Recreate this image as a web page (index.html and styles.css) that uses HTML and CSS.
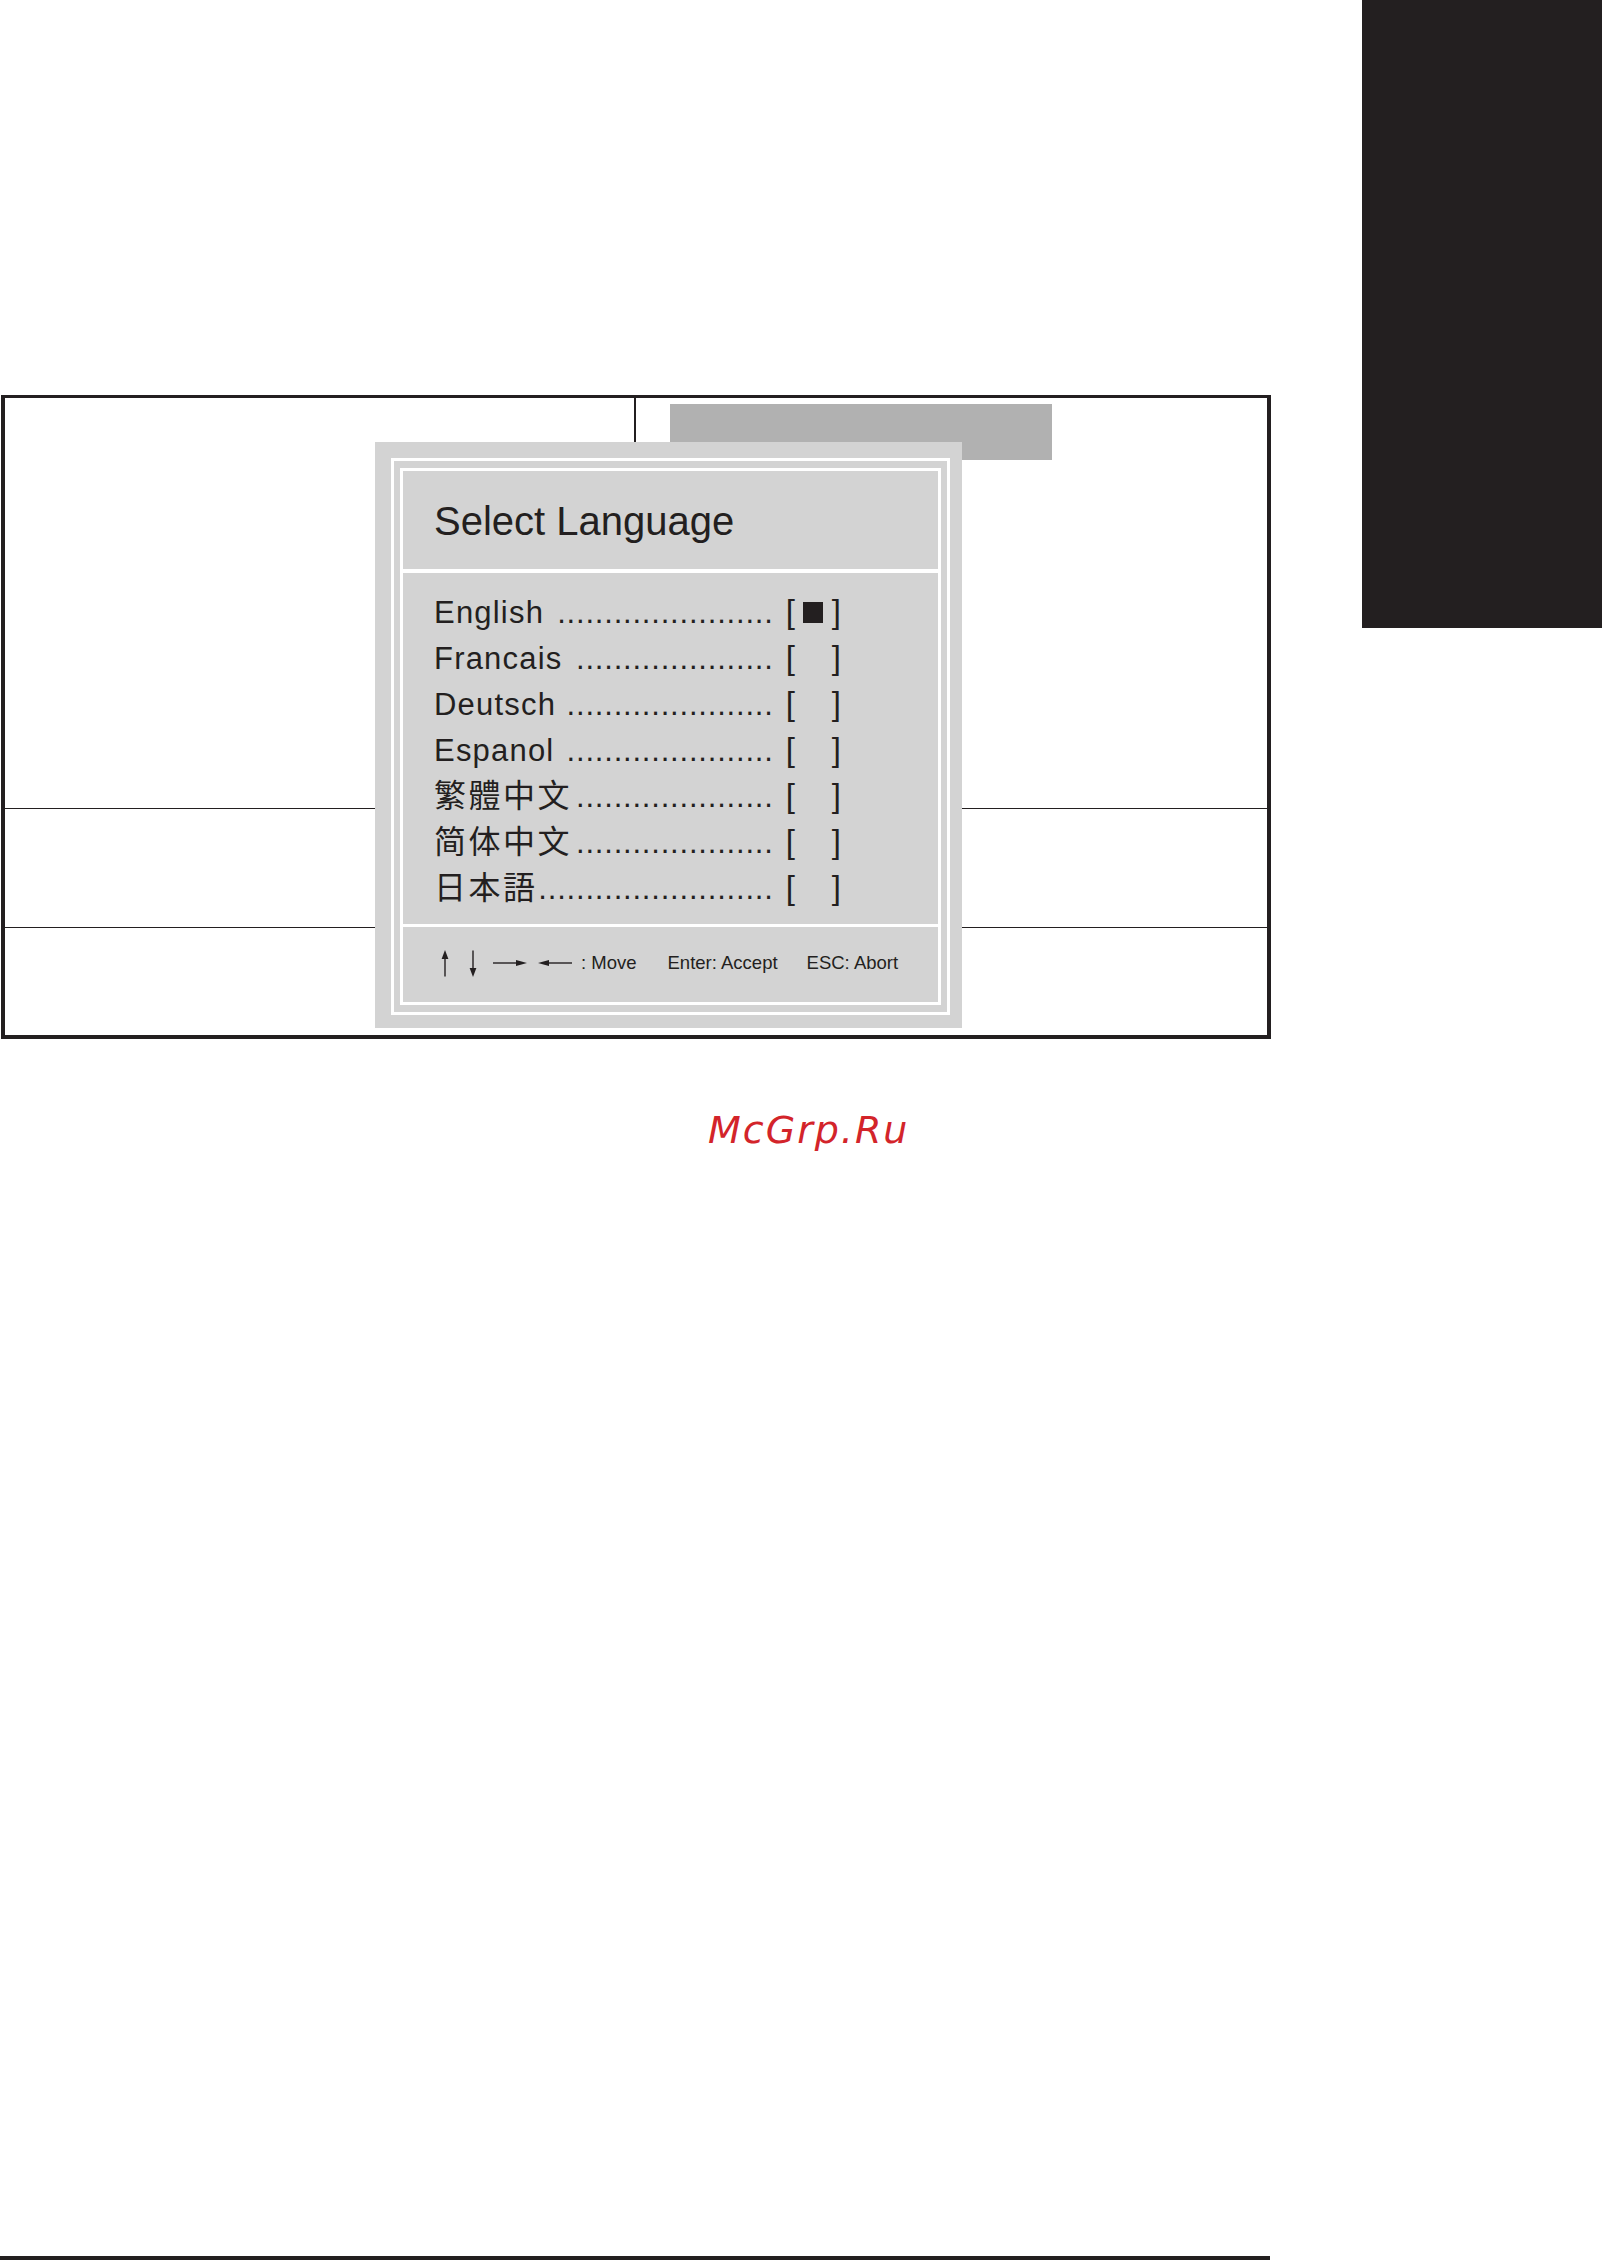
FILE: index.html
```html
<!DOCTYPE html>
<html lang="en">
<head>
<meta charset="utf-8">
<title>Select Language</title>
<link rel="stylesheet" href="styles.css">
</head>
<body>
<div class="page">
  <div class="main">
    <div class="frame">
      <div class="frame-head">
        <div class="head-left"></div>
        <div class="head-right"><div class="head-tab"></div></div>
      </div>
      <div class="frame-row"></div>
      <div class="frame-row last"></div>

      <div class="dialog">
        <div class="dlg-outer">
          <div class="dlg-inner">
            <div class="dlg-title">Select Language</div>
            <div class="dlg-items">
              <div class="item"><span class="label">English</span><span class="dots">.......................</span><span class="check"><span class="br">[</span><span class="mark on"></span><span class="br">]</span></span></div>
              <div class="item"><span class="label">Francais</span><span class="dots">.....................</span><span class="check"><span class="br">[</span><span class="mark"></span><span class="br">]</span></span></div>
              <div class="item"><span class="label">Deutsch</span><span class="dots">......................</span><span class="check"><span class="br">[</span><span class="mark"></span><span class="br">]</span></span></div>
              <div class="item"><span class="label">Espanol</span><span class="dots">......................</span><span class="check"><span class="br">[</span><span class="mark"></span><span class="br">]</span></span></div>
              <div class="item"><span class="label cjk tc" lang="zh-Hant">繁體中文</span><span class="dots">.....................</span><span class="check"><span class="br">[</span><span class="mark"></span><span class="br">]</span></span></div>
              <div class="item"><span class="label cjk sc" lang="zh-Hans">简体中文</span><span class="dots">.....................</span><span class="check"><span class="br">[</span><span class="mark"></span><span class="br">]</span></span></div>
              <div class="item"><span class="label cjk jp" lang="ja">日本語</span><span class="dots">.........................</span><span class="check"><span class="br">[</span><span class="mark"></span><span class="br">]</span></span></div>
            </div>
            <div class="dlg-foot">
              <svg class="arr up" width="8" height="27" viewBox="0 0 8 27"><line x1="4" y1="26.5" x2="4" y2="7" stroke="#231f20" stroke-width="1.4"/><polygon points="4,0 7.4,9 0.6,9" fill="#231f20"/></svg>
              <svg class="arr down" width="10" height="27" viewBox="0 0 10 27"><line x1="5" y1="0.5" x2="5" y2="20" stroke="#231f20" stroke-width="1.4"/><polygon points="5,27 8.4,18 1.6,18" fill="#231f20"/></svg>
              <svg class="arr right" width="34" height="8" viewBox="0 0 34 8"><line x1="0" y1="4" x2="26" y2="4" stroke="#231f20" stroke-width="1.4"/><polygon points="34,4 23,1 23,7" fill="#231f20"/></svg>
              <svg class="arr left" width="34" height="8" viewBox="0 0 34 8"><line x1="8" y1="4" x2="34" y2="4" stroke="#231f20" stroke-width="1.4"/><polygon points="0,4 11,1 11,7" fill="#231f20"/></svg>
              <span class="key move">: Move</span>
              <span class="key enter">Enter: Accept</span>
              <span class="key esc">ESC: Abort</span>
            </div>
          </div>
        </div>
      </div>
    </div>

    <div class="watermark">McGrp.Ru</div>

    <div class="bottom-rule"></div>
  </div>
  <div class="side">
    <div class="side-tab"></div>
  </div>
</div>
</body>
</html>
```

FILE: styles.css
```css
html, body {
  margin: 0;
  padding: 0;
  background: #ffffff;
}

body {
  font-family: "Liberation Sans", Arial, Helvetica, sans-serif;
  color: #231f20;
}

.page {
  display: grid;
  grid-template-columns: 1271px 1fr;
  height: 2260px;
  overflow: hidden;
}

.main {
  display: flex;
  flex-direction: column;
  padding-top: 395px;
  box-sizing: border-box;
  height: 2260px;
}

.side {
  display: flex;
  justify-content: flex-end;
  align-items: flex-start;
}

.side-tab {
  width: 240px;
  height: 628px;
  background: #231f20;
}

/* ---------- outer frame ---------- */
.frame {
  position: relative;
  margin-left: 1px;
  width: 1270px;
  height: 644px;
  box-sizing: border-box;
  border-style: solid;
  border-color: #231f20;
  border-width: 3px 4px 4px 4px;
  display: flex;
  flex-direction: column;
}

.frame-head {
  display: flex;
  height: 410px;
  flex: none;
}

.head-left {
  width: 629px;
  border-right: 2px solid #231f20;
}

.head-right {
  flex: 1;
}

.head-tab {
  margin-left: 34px;
  margin-top: 6px;
  width: 382px;
  height: 56px;
  background: #b1b1b1;
}

.frame-row {
  border-top: 1px solid #231f20;
  height: 118px;
  flex: none;
}

.frame-row.last {
  flex: 1;
  height: auto;
}

/* ---------- dialog ---------- */
.dialog {
  position: absolute;
  left: 370px;
  top: 44px;
  width: 587px;
  height: 586px;
  box-sizing: border-box;
  background: #d3d3d3;
  padding: 16px 12px 13px 16px;
}

.dlg-outer {
  height: 100%;
  box-sizing: border-box;
  border: 3px solid #ffffff;
  padding: 7px 6px;
}

.dlg-inner {
  height: 100%;
  box-sizing: border-box;
  border: 3px solid #ffffff;
  display: flex;
  flex-direction: column;
}

.dlg-title {
  height: 102px;
  flex: none;
  box-sizing: border-box;
  padding: 30px 0 0 31px;
  font-size: 40px;
  line-height: 40px;
  border-bottom: 4px solid #ffffff;
  white-space: nowrap;
}

.dlg-items {
  height: 354px;
  flex: none;
  box-sizing: border-box;
  padding: 16px 0 0 31px;
  border-bottom: 3px solid #ffffff;
}

.item {
  display: flex;
  align-items: baseline;
  width: 407px;
  height: 46px;
  line-height: 46px;
  font-size: 31px;
  white-space: nowrap;
}

.label {
  letter-spacing: 1.2px;
  flex: none;
}

.label.cjk {
  font-size: 32px;
  letter-spacing: 2.5px;
}

.label.tc { font-family: "Liberation Sans", "Noto Sans CJK TC", sans-serif; }
.label.sc { font-family: "Liberation Sans", "Noto Sans CJK SC", sans-serif; }
.label.jp { font-family: "Liberation Sans", "Noto Sans CJK JP", sans-serif; }

.dots {
  flex: none;
  margin-left: auto;
  margin-right: 12px;
  letter-spacing: 0.8px;
}

.check {
  display: flex;
  align-items: baseline;
  flex: none;
}

.br {
  font-size: 33px;
  line-height: 46px;
}

.mark {
  display: inline-block;
  width: 20px;
  height: 21px;
  margin: 0 8.5px;
}

.mark.on {
  background: #231f20;
}

/* ---------- footer ---------- */
.dlg-foot {
  flex: 1;
  display: flex;
  align-items: center;
  box-sizing: border-box;
  padding: 0 0 3px 38px;
  font-size: 18.5px;
  line-height: 20px;
  white-space: nowrap;
}

.arr {
  display: block;
  flex: none;
}

.arr.down { margin-left: 19px; }
.arr.right { margin-left: 15px; }
.arr.left { margin-left: 11px; }

.key.move { margin-left: 9px; }
.key.enter { margin-left: 31px; }
.key.esc { margin-left: 29px; }

/* ---------- watermark ---------- */
.watermark {
  margin-top: 72px;
  margin-left: 708px;
  font-family: "DejaVu Sans", sans-serif;
  font-style: italic;
  font-size: 38px;
  line-height: 38px;
  letter-spacing: 2px;
  color: #d3242a;
  white-space: nowrap;
}

.bottom-rule {
  margin-top: auto;
  width: 1270px;
  height: 4px;
  background: #231f20;
  flex: none;
}
```
